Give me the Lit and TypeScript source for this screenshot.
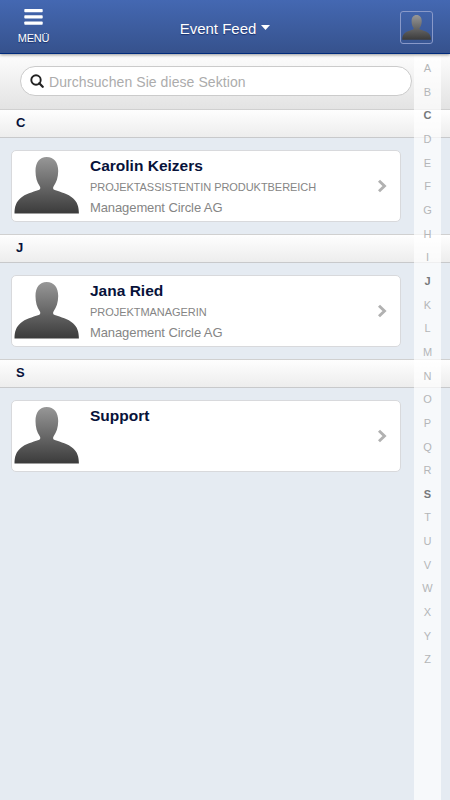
import { LitElement, html, css, svg, nothing } from "lit";
import { customElement, property } from "lit/decorators.js";
import { classMap } from "lit/directives/class-map.js";

interface Contact {
  name: string;
  role?: string;
  company?: string;
}

const GROUPS: { letter: string; contacts: Contact[] }[] = [
  {
    letter: "C",
    contacts: [
      {
        name: "Carolin Keizers",
        role: "PROJEKTASSISTENTIN PRODUKTBEREICH",
        company: "Management Circle AG",
      },
    ],
  },
  {
    letter: "J",
    contacts: [
      { name: "Jana Ried", role: "PROJEKTMANAGERIN", company: "Management Circle AG" },
    ],
  },
  { letter: "S", contacts: [{ name: "Support" }] },
];

const silhouette = svg`
  <defs>
    <linearGradient id="shade" x1="0" y1="0" x2="0" y2="1">
      <stop offset="0" stop-color="#979797" />
      <stop offset="1" stop-color="#3b3b3b" />
    </linearGradient>
  </defs>
  <path fill="url(#shade)" d="M32.700 0C40 0 44.200 5.500 44.200 14C44.200 20.500 42.300 25.500 39.800 29C38.600 30.800 38.900 32.500 40.800 33.100C47 35.200 54 37 59 41.200C63.200 44.900 64.900 49.500 64.900 56.500H.5C.5 49.500 2.200 44.900 6.400 41.200C11.400 37 18.400 35.200 24.600 33.100C26.500 32.500 26.800 30.800 25.600 29C23.100 25.500 21.500 20.500 21.500 14C21.500 5.500 25.500 0 32.700 0Z" />`;

@customElement("user-avatar")
class UserAvatar extends LitElement {
  static styles = css`
    :host { display: block; }
    svg { display: block; width: 100%; height: 100%; }
  `;
  render() {
    return html`<svg viewBox="0 0 65 57" preserveAspectRatio="none">${silhouette}</svg>`;
  }
}

@customElement("contact-card")
class ContactCard extends LitElement {
  @property({ attribute: false }) contact!: Contact;

  static styles = css`
    :host {
      display: flex;
      box-sizing: border-box;
      height: 72px;
      background: #fff;
      border: 1px solid #d8d9dc;
      border-radius: 5px;
    }
    .avatar { width: 65px; height: 57px; margin: 5.5px 0 0 2px; flex: none; }
    .text { flex: 1; padding: 5px 0 0 11px; white-space: nowrap; }
    .name { font-size: 15.5px; line-height: 20px; font-weight: bold; color: #07123a; }
    .role { font-size: 11px; line-height: 20px; margin-top: 1px; color: #858585; letter-spacing: -0.05px; }
    .company { font-size: 13px; line-height: 20px; margin-top: 1px; color: #858585; letter-spacing: -0.1px; }
    .chevron { width: 10px; height: 14px; margin: 28px 13px 0 0; flex: none; }
  `;

  render() {
    const { name, role, company } = this.contact;
    return html`
      <user-avatar class="avatar"></user-avatar>
      <div class="text">
        <div class="name">${name}</div>
        ${role ? html`<div class="role">${role}</div>` : nothing}
        ${company ? html`<div class="company">${company}</div>` : nothing}
      </div>
      <svg class="chevron" viewBox="0 0 10 14">
        <path d="M2 1.700L7.500 7L2 12.300" fill="none" stroke="#b1b1b1" stroke-width="2.900" />
      </svg>
    `;
  }
}

@customElement("letter-index")
class LetterIndex extends LitElement {
  @property({ attribute: false }) active: string[] = [];

  static styles = css`
    :host {
      display: block;
      box-sizing: border-box;
      width: 27px;
      padding-top: 2px;
      background: rgba(255, 255, 255, 0.7);
    }
    .letter {
      height: 23.66px;
      line-height: 23.66px;
      font-size: 11px;
      text-align: center;
      color: #b4b6b8;
    }
    .on { font-weight: bold; color: #77797b; }
  `;

  render() {
    return [..."ABCDEFGHIJKLMNOPQRSTUVWXYZ"].map(
      (l) => html`<div class=${classMap({ letter: true, on: this.active.includes(l) })}>${l}</div>`
    );
  }
}

@customElement("app-root")
class AppRoot extends LitElement {
  static styles = css`
    :host {
      display: block;
      position: relative;
      height: 800px;
      overflow: hidden;
      background: #e5ebf2;
      font-family: "Liberation Sans", Arial, sans-serif;
    }
    header {
      position: relative;
      z-index: 2;
      box-sizing: border-box;
      height: 54px;
      display: grid;
      grid-template-columns: 67px 1fr 67px;
      background: linear-gradient(#4468b2, #36528d);
      border-bottom: 1px solid #002b7c;
      box-shadow: 0 1px 3px rgba(0, 0, 0, 0.4);
      color: #fff;
      text-shadow: 0 1px 1px rgba(0, 20, 80, 0.6);
    }
    .menu { display: flex; flex-direction: column; align-items: center; padding-top: 9px; }
    .bars { width: 19px; height: 16px; }
    .caption { font-size: 11px; line-height: 13px; margin-top: 7px; letter-spacing: -0.2px; }
    .title {
      display: flex;
      align-items: center;
      justify-content: center;
      padding-top: 4px;
      font-size: 15px;
    }
    .caret {
      width: 9px;
      height: 5px;
      margin: -2px 0 0 5px;
    }
    .me {
      box-sizing: border-box;
      width: 33px;
      height: 33px;
      margin: 11px 0 0 17px;
      border: 1px solid #8999c9;
      border-radius: 3px;
      padding: 3px 1px 0;
    }
    .me user-avatar { width: 29px; height: 25px; }
    .search {
      box-sizing: border-box;
      height: 55px;
      padding: 12px 38px 0 20px;
      background: linear-gradient(#fdfdfd, #e3e3e3);
    }
    .field {
      box-sizing: border-box;
      height: 30px;
      display: flex;
      align-items: center;
      padding-left: 9px;
      background: #fff;
      border: 1px solid #cbcbcb;
      border-radius: 15px;
      font-size: 14px;
      color: #acacac;
    }
    .lens { width: 14px; height: 14px; margin-right: 5px; }
    .placeholder { padding-top: 2px; letter-spacing: 0.07px; }
    .group {
      box-sizing: border-box;
      height: 29px;
      padding-left: 16px;
      line-height: 25px;
      font-size: 13px;
      font-weight: bold;
      color: #07123a;
      background: linear-gradient(#fefefe, #ededed);
      border-top: 1px solid #d0d0d0;
      border-bottom: 1px solid #c8c9cb;
    }
    .cards { padding: 12px 49px 12px 11px; }
    letter-index { position: absolute; top: 55px; right: 9px; bottom: 0; z-index: 1; }
  `;

  render() {
    return html`
      <header>
        <div class="menu">
          <svg class="bars" viewBox="0 0 19 16" fill="#fff">
            <rect x=".3" y="0" width="18.400" height="3.200" rx=".8" />
            <rect x=".3" y="6.300" width="18.400" height="3.200" rx=".8" />
            <rect x=".3" y="12.500" width="18.400" height="3.200" rx=".8" />
          </svg>
          <div class="caption">MENÜ</div>
        </div>
        <div class="title">
          <span>Event Feed</span>
          <svg class="caret" viewBox="0 0 9 5"><path d="M0 0h9L4.500 5z" fill="#fff" /></svg>
        </div>
        <div class="me"><user-avatar></user-avatar></div>
      </header>
      <div class="search">
        <div class="field">
          <svg class="lens" viewBox="0 0 14 14" fill="none" stroke="#222">
            <circle cx="6" cy="6" r="4.700" stroke-width="1.900" />
            <path d="M9.300 9.300L12.700 12.700" stroke-width="2.300" stroke-linecap="round" />
          </svg>
          <span class="placeholder">Durchsuchen Sie diese Sektion</span>
        </div>
      </div>
      ${GROUPS.map(
        (g) => html`
          <div class="group">${g.letter}</div>
          <div class="cards">
            ${g.contacts.map((c) => html`<contact-card .contact=${c}></contact-card>`)}
          </div>
        `
      )}
      <letter-index .active=${GROUPS.map((g) => g.letter)}></letter-index>
    `;
  }
}
